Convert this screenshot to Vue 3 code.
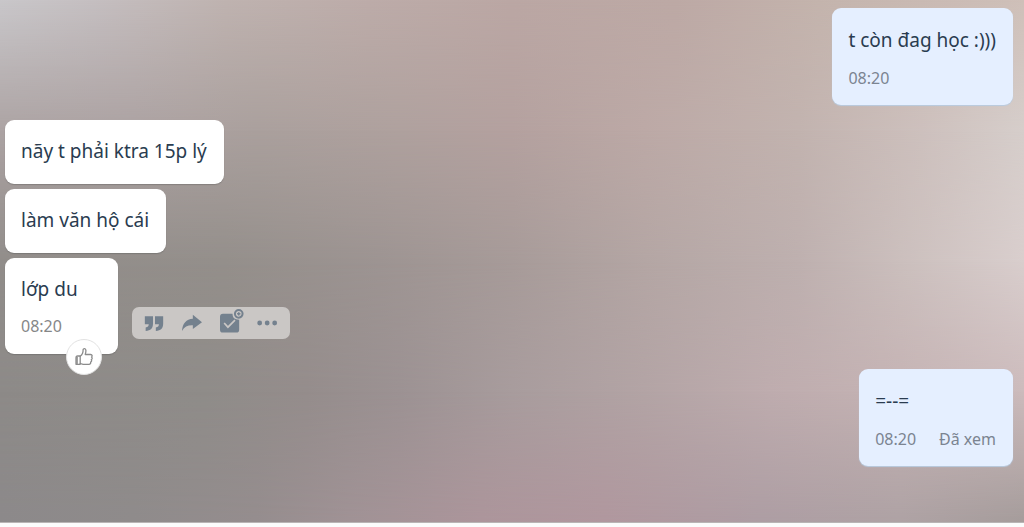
<script setup>
const received = [
  { id: 1, text: 'nãy t phải ktra 15p lý' },
  { id: 2, text: 'làm văn hộ cái' },
]
</script>

<template>
  <main class="chat">
    <div class="wallpaper" aria-hidden="true">
      <i class="band b1"></i><i class="band b2"></i><i class="band b3"></i><i class="band b4"></i><i class="band b5"></i>
    </div>

    <section class="group own">
      <article class="bubble">
        <p>t còn đag học :)))</p>
        <footer><time>08:20</time></footer>
      </article>
    </section>

    <section class="group">
      <article v-for="m in received" :key="m.id" class="bubble">
        <p>{{ m.text }}</p>
      </article>
      <div class="row">
        <article class="bubble last">
          <p>lớp du</p>
          <footer><time>08:20</time></footer>
          <button class="react" type="button" aria-label="Thích">
            <svg viewBox="0 0 20 20" width="20" height="20" fill="none" stroke="#8c8c8c" stroke-width="1.3" stroke-linejoin="round" stroke-linecap="round">
              <path d="M6.2 9.2 C8.6 7.6 9.2 5.4 9.1 2.8 C9.1 1.2 11.8 1.2 11.9 3.4 C12 4.8 11.6 6.2 11.2 7.5 H16.6 C18.3 7.5 18.6 9.4 17.5 10 C18.6 10.8 18.3 12.3 17.3 12.6 C18 13.6 17.5 14.8 16.6 15.1 C17 16.4 16.2 17.3 15 17.3 H9.2 C7.8 17.3 7.2 16.7 6.2 16.4" />
              <path d="M6.2 9 H3.6 Q2 9 2 11 V17.3 H6.2 Z" />
              <path d="M3 10.5 V16.6" stroke-width="1.6" />
            </svg>
          </button>
        </article>
        <div class="tools">
          <button type="button" aria-label="Trả lời">
            <svg viewBox="0 0 24 24" width="24" height="24" fill="#74818e">
              <path d="M1 4 H10.800 V13 C10.800 18.500 8 21.300 2 21.500 V17.300 C4.600 17 5.600 15.800 5.700 13.500 H1 Z M13.200 4 H23 V13 C23 18.500 20.200 21.300 14.200 21.500 V17.300 C16.800 17 17.800 15.800 17.900 13.500 H13.200 Z" />
            </svg>
          </button>
          <button type="button" aria-label="Chia sẻ">
            <svg viewBox="0 0 24 24" width="24" height="24" fill="#74818e">
              <path d="M13 2 L24 11 L13 19.200 V14.800 C7 14.500 3 16.600 0 21.500 C0.800 12.500 5 7.600 13 7 Z" />
            </svg>
          </button>
          <button type="button" aria-label="Giao việc">
            <svg viewBox="0 0 24 24" width="24" height="24" fill="none">
              <path d="M3.500 1 H15 C15.200 6 17.500 8 23 8 V20 Q23 23.500 19.500 23.500 H3.500 Q0 23.500 0 20 V4.500 Q0 1 3.500 1 Z" fill="#74818e" />
              <path d="M5 12 L9.500 17 L18 8.500" stroke="#cac7c5" stroke-width="2" />
              <circle cx="22.500" cy="1" r="4.600" fill="#cac7c5" stroke="#74818e" stroke-width="2.400" />
              <path d="M22.500 -1 V3 M20.500 1 H24.500" stroke="#74818e" stroke-width="1.800" />
            </svg>
          </button>
          <button type="button" aria-label="Thêm">
            <svg viewBox="0 0 24 24" width="24" height="24" fill="#74818e">
              <circle cx="2" cy="12" r="2.900" /><circle cx="11" cy="12" r="2.900" /><circle cx="20" cy="12" r="2.900" />
            </svg>
          </button>
        </div>
      </div>
    </section>

    <section class="group own">
      <article class="bubble">
        <p>=--=</p>
        <footer><time>08:20</time><span>Đã xem</span></footer>
      </article>
    </section>
  </main>
</template>

<style>
body {
  background: #fcfcfc;
}
</style>

<style scoped>
.chat {
  position: relative;
  box-sizing: border-box;
  display: flex;
  flex-direction: column;
  gap: 15px;
  min-height: calc(100vh - 4px);
  padding: 8px 11px 40px 5px;
  border-bottom: 1px solid #b9b5b5;
  font-family: "Segoe UI", "Noto Sans", "Open Sans", sans-serif;
}
.wallpaper {
  position: absolute;
  inset: 0;
  z-index: -1;
  overflow: hidden;
}
.band {
  position: absolute;
  inset: 0;
}
.b1 {
  background: linear-gradient(90deg, #c9c7ca, #c5bfc1 9%, #bfb3b0 22%, #bdaca9 36%, #bba7a4 50%, #bda9a5 66%, #c4b4ad 80%, #cfc0b9);
}
.b2 {
  background: linear-gradient(90deg, #aca3a3, #aca2a2 13%, #aaa09d 25%, #afa19e 39%, #b4a19f 50%, #bca9a6 63%, #c2b3af 78%, #cdc0bd 90%, #d6cecb);
  mask-image: linear-gradient(transparent, #000 25%);
}
.b3 {
  background: linear-gradient(90deg, #918d8a, #948f8b 22%, #9d9492 37%, #a79b99 50%, #b4a6a4 63%, #beb0af 78%, #cbbfbd 88%, #d9cecd);
  mask-image: linear-gradient(transparent 25%, #000 50%);
}
.b4 {
  background: linear-gradient(90deg, #8d8a88, #8f8c89 20%, #958d8c 30%, #9c9293 39%, #a89c9d 50%, #b3a4a5 63%, #beacae 75%, #c5b3b4 88%, #ccbbbc);
  mask-image: linear-gradient(transparent 50%, #000 75%);
}
.b5 {
  background: linear-gradient(90deg, #8c898a, #8f8b8b 13%, #958d8e 25%, #a09295 34%, #ac959b 47%, #b0979e 59%, #ad9da3 74%, #aea2a4 88%, #a59c9b);
  mask-image: linear-gradient(transparent 75%, #000);
}
.group {
  display: flex;
  flex-direction: column;
  align-items: flex-start;
  gap: 5px;
}
.own {
  align-items: flex-end;
}
.bubble {
  position: relative;
  padding: 15px 17px 17px 16px;
  border-radius: 9px;
  background: #fff;
  box-shadow: 0 1px 1px rgba(80, 80, 80, 0.35);
}
.own .bubble {
  padding: 16px 17px 16px 16px;
  background: #e5efff;
  box-shadow: 0 1px 1px #b9cbe0;
}
p {
  margin: 0;
  color: #2a3c50;
  font-size: 19px;
  line-height: 32px;
}
footer {
  display: flex;
  gap: 23px;
  margin-top: 10px;
  color: #868788;
  font-size: 16px;
  line-height: 22px;
}
.own footer {
  margin-top: 11px;
  color: #7b8491;
}
.row {
  display: flex;
  align-items: flex-end;
  gap: 14px;
}
.last {
  box-sizing: border-box;
  min-width: 113px;
}
button {
  display: flex;
  align-items: center;
  justify-content: center;
  padding: 0;
  border: 0;
  background: none;
}
.react {
  position: absolute;
  right: 16px;
  bottom: -21px;
  width: 36px;
  height: 36px;
  border: 1px solid #e2e2e2;
  border-radius: 50%;
  background: #fff;
}
.tools {
  display: flex;
  align-items: center;
  gap: 18px;
  height: 32px;
  margin-bottom: 15px;
  padding: 0 12px;
  border-radius: 7px;
  background: #cac7c5;
}
.tools svg {
  width: 20px;
  height: 20px;
  overflow: visible;
}
</style>
